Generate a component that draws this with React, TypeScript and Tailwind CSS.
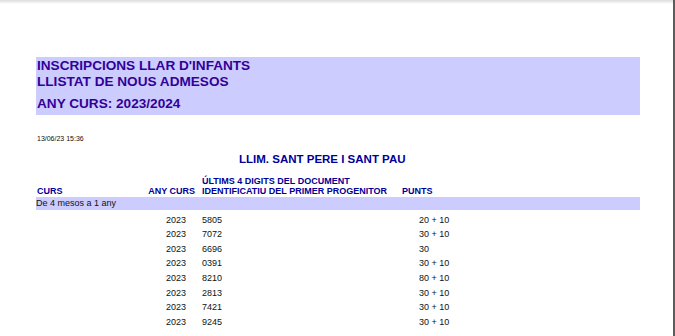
import React from "react";

const rows: [string, string, string][] = [
  ["2023", "5805", "20 + 10"],
  ["2023", "7072", "30 + 10"],
  ["2023", "6696", "30"],
  ["2023", "0391", "30 + 10"],
  ["2023", "8210", "80 + 10"],
  ["2023", "2813", "30 + 10"],
  ["2023", "7421", "30 + 10"],
  ["2023", "9245", "30 + 10"],
];

export default function App() {
  return (
    <div className="relative w-[675px] h-[336px] overflow-hidden bg-white font-['Liberation_Sans',Arial,sans-serif] border-r-2 border-[#5c5c5c]">
      <div className="absolute top-0 left-0 right-0 h-[4px] bg-gradient-to-b from-[#dcdcdc] to-white" />
      <div className="pl-[36px] pt-[57px]">
        <div className="w-[604px] h-[58px] bg-[#ccccff] pt-[1px] pl-[1px] font-bold text-[13.6px] leading-[16px] text-[#330099]">
          <div>INSCRIPCIONS LLAR D'INFANTS</div>
          <div>LLISTAT DE NOUS ADMESOS</div>
          <div className="mt-[6px]">ANY CURS: 2023/2024</div>
        </div>
        <div className="mt-[20px] pl-[1px] text-[7px] leading-[8px] text-[#111]">13/06/23 15:36</div>
        <div className="mt-[10px] pl-[203px] font-bold text-[11.5px] leading-[13px] text-[#000099]">
          LLIM. SANT PERE I SANT PAU
        </div>
        <div className="mt-[9.5px] flex items-end font-bold text-[9px] leading-[10px] text-[#000099]">
          <div className="w-[110px] pl-[1px]">CURS</div>
          <div className="w-[49px] text-right">ANY CURS</div>
          <div className="w-[207px] pl-[7px]">
            <div>ÚLTIMS 4 DIGITS DEL DOCUMENT</div>
            <div>IDENTIFICATIU DEL PRIMER PROGENITOR</div>
          </div>
          <div>PUNTS</div>
        </div>
        <div className="mt-[1px] w-[604px] h-[13px] bg-[#ccccff] text-[9px] leading-[13px] text-[#111]">
          De 4 mesos a 1 any
        </div>
        <div className="mt-[3px] text-[9px] text-[#111]">
          {rows.map(([a, d, p], i) => (
            <div key={i} className="flex h-[14.67px] leading-[14.67px]">
              <div className="w-[150px] text-right">{a}</div>
              <div className="w-[233px] pl-[16px]">{d}</div>
              <div>{p}</div>
            </div>
          ))}
        </div>
      </div>
    </div>
  );
}
